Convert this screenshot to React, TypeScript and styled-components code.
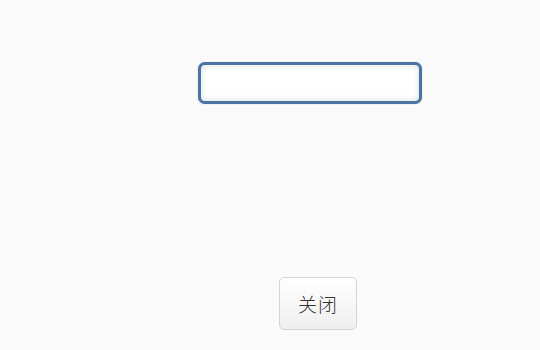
import React from "react";
import styled, { createGlobalStyle } from "styled-components";

const GlobalStyle = createGlobalStyle`
  html, body {
    margin: 0;
    padding: 0;
    background: #fafafa;
  }
  body {
    font-family: "Noto Sans CJK SC", "Liberation Sans", sans-serif;
  }
`;

const Page = styled.div`
  width: 540px;
  height: 350px;
  display: flex;
  flex-direction: column;
  align-items: flex-start;
  box-sizing: border-box;
  padding-top: 62px;
`;

const Field = styled.input`
  margin-left: 198px;
  width: 224px;
  height: 42px;
  box-sizing: border-box;
  border: 3px solid #4a74a3;
  border-radius: 7px;
  background: #fff;
  box-shadow: inset 0 0 7px rgba(0, 0, 0, 0.14), 0 0 1px rgba(74, 116, 163, 0.6);
  outline: none;
  padding: 0 8px;
  font-size: 14px;
`;

const CloseButton = styled.button`
  margin-left: 279px;
  margin-top: 173px;
  width: 78px;
  height: 53px;
  box-sizing: border-box;
  border: 1px solid #d4d4d4;
  border-radius: 5px;
  background: linear-gradient(#ffffff, #efefef);
  color: #333;
  font-family: "Noto Sans CJK SC", "Liberation Sans", sans-serif;
  font-size: 19px;
  font-weight: 300;
  letter-spacing: 1px;
  cursor: pointer;
`;

export default function App() {
  return (
    <>
      <GlobalStyle />
      <Page>
        <Field type="text" />
        <CloseButton>关闭</CloseButton>
      </Page>
    </>
  );
}
